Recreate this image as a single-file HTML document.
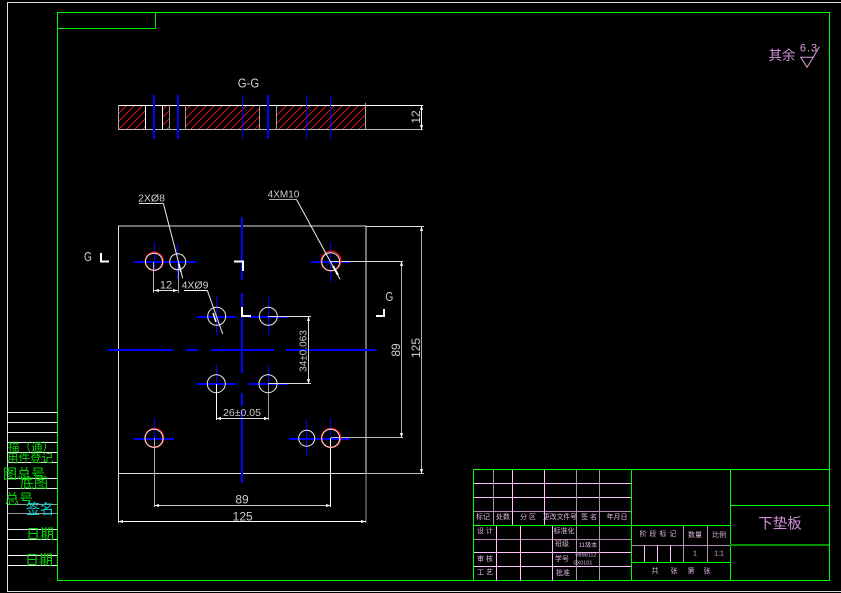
<!DOCTYPE html>
<html lang="zh"><head><meta charset="utf-8"><title>下垫板</title>
<style>
html,body{margin:0;padding:0;background:#000;width:841px;height:593px;overflow:hidden}
svg{display:block}
text{font-family:"Liberation Sans","Noto Sans CJK SC",sans-serif;text-anchor:middle;dominant-baseline:central}
.c line,.c rect,.c polyline{shape-rendering:crispEdges}
.p{fill:#e0b8e0;font-size:7px}
.d{fill:#ccc;font-size:11px;font-family:"Liberation Sans","Noto Sans CJK SC",sans-serif}
.g{fill:#00d800}
</style></head><body>
<svg width="841" height="593" viewBox="0 0 841 593" xmlns="http://www.w3.org/2000/svg">
<defs>
<pattern id="h" patternUnits="userSpaceOnUse" width="8" height="8"><path d="M-1 9L9 -1" stroke="#e01010" stroke-width="1"/></pattern>
</defs>
<rect width="841" height="593" fill="#000"/>
<g class="c" fill="none">
<polyline points="841,2.5 7.5,2.5 7.5,591.5 841,591.5" stroke="#ddd"/>
<g stroke="#eee">
<line x1="8" x2="57" y1="412.5" y2="412.5"/><line x1="8" x2="57" y1="422.5" y2="422.5"/><line x1="8" x2="57" y1="432.5" y2="432.5"/><line x1="8" x2="57" y1="442.5" y2="442.5"/><line x1="8" x2="57" y1="452.5" y2="452.5"/><line x1="8" x2="57" y1="462.5" y2="462.5"/><line x1="8" x2="57" y1="478.5" y2="478.5"/><line x1="8" x2="57" y1="488.5" y2="488.5"/><line x1="8" x2="57" y1="504.5" y2="504.5" stroke="#999"/><line x1="8" x2="57" y1="513.5" y2="513.5" stroke="#999"/><line x1="8" x2="57" y1="529.5" y2="529.5"/><line x1="8" x2="57" y1="539.5" y2="539.5"/><line x1="8" x2="57" y1="555.5" y2="555.5" stroke="#fff"/><line x1="8" x2="57" y1="565.5" y2="565.5" stroke="#fff"/>
</g>
<rect x="57.5" y="12.5" width="772" height="568" stroke="#00ff00"/>
<polyline points="57.5,28.5 155.5,28.5 155.5,12.5" stroke="#00f000"/>
<g stroke="#ffc0ff">
<line x1="473" x2="631" y1="483.5" y2="483.5"/><line x1="473" x2="631" y1="497.5" y2="497.5"/><line x1="473" x2="631" y1="511.5" y2="511.5" stroke="#b090b0"/>
<line x1="473" x2="631" y1="539.5" y2="539.5" stroke="#b090b0"/><line x1="473" x2="631" y1="552.5" y2="552.5"/><line x1="473" x2="631" y1="566.5" y2="566.5"/>
<line x1="493.5" x2="493.5" y1="470" y2="525" stroke="#b090b0"/><line x1="512.5" x2="512.5" y1="470" y2="525"/><line x1="544.5" x2="544.5" y1="470" y2="525"/><line x1="576.5" x2="576.5" y1="470" y2="581" stroke="#b090b0"/><line x1="599.5" x2="599.5" y1="470" y2="581" stroke="#b090b0"/>
<line x1="496.5" x2="496.5" y1="525" y2="581"/><line x1="520.5" x2="520.5" y1="525" y2="581"/><line x1="552.5" x2="552.5" y1="525" y2="581"/>
<line x1="631" x2="730" y1="545.5" y2="545.5" stroke="#b090b0"/>
<line x1="683.5" x2="683.5" y1="525" y2="562" stroke="#b090b0"/><line x1="707.5" x2="707.5" y1="525" y2="562" stroke="#b090b0"/>
<line x1="644.5" x2="644.5" y1="545" y2="562"/><line x1="657.5" x2="657.5" y1="545" y2="562"/><line x1="670.5" x2="670.5" y1="545" y2="562"/>
</g>
<g stroke="#00ff00">
<line x1="473" x2="829" y1="469.5" y2="469.5"/><line x1="473.5" x2="473.5" y1="469" y2="581"/>
<line x1="473" x2="730" y1="525.5" y2="525.5"/><line x1="631.5" x2="631.5" y1="469" y2="581"/><line x1="730.5" x2="730.5" y1="469" y2="581"/>
<line x1="730" x2="829" y1="505.5" y2="505.5"/><line x1="730" x2="829" y1="545" y2="545" stroke="#009000" stroke-width="2"/><line x1="631" x2="730" y1="562.5" y2="562.5"/>
</g>
<rect x="118" y="105" width="27" height="24" fill="url(#h)"/><rect x="162" y="105" width="8" height="24" fill="url(#h)"/><rect x="186" y="105" width="73" height="24" fill="url(#h)"/><rect x="277" y="105" width="88" height="24" fill="url(#h)"/>
<g stroke="#ddd">
<line x1="118" x2="423" y1="105.5" y2="105.5" stroke="#fff"/><line x1="118" x2="423" y1="129.5" y2="129.5" stroke="#bbb"/>
<line x1="118.5" x2="118.5" y1="105" y2="130" stroke="#aaa"/><line x1="145.5" x2="145.5" y1="105" y2="130" stroke="#fff"/><line x1="162.5" x2="162.5" y1="105" y2="130" stroke="#fff"/><line x1="169.5" x2="169.5" y1="105" y2="130" stroke="#999"/><line x1="185.5" x2="185.5" y1="105" y2="130" stroke="#999"/><line x1="259.5" x2="259.5" y1="105" y2="130" stroke="#999"/><line x1="276.5" x2="276.5" y1="105" y2="130" stroke="#999"/><line x1="365.5" x2="365.5" y1="103" y2="130" stroke="#aaa"/><line x1="421.5" x2="421.5" y1="105" y2="130" stroke="#fff"/>
</g>
<g stroke="#0000ff">
<line x1="154" x2="154" y1="95" y2="139" stroke-width="2"/><line x1="178" x2="178" y1="95" y2="139" stroke-width="2"/><line x1="268" x2="268" y1="95" y2="139" stroke-width="2"/><line x1="242.5" x2="242.5" y1="95" y2="139"/><line x1="306.5" x2="306.5" y1="95" y2="139"/><line x1="330.5" x2="330.5" y1="95" y2="139"/>
</g>
<rect x="118.5" y="226" width="247.500" height="247.500" stroke="#ddd"/>
<g stroke="#0000ff">
<line x1="242" x2="242" y1="217" y2="280" stroke-width="2"/><line x1="242" x2="242" y1="293" y2="373" stroke-width="2"/><line x1="242" x2="242" y1="393" y2="406" stroke-width="2"/><line x1="242" x2="242" y1="410" y2="483" stroke-width="2"/>
<g stroke-width="2">
<line x1="108" x2="173" y1="350" y2="350"/><line x1="186" x2="198" y1="350" y2="350"/><line x1="211" x2="274" y1="350" y2="350"/><line x1="286" x2="376" y1="350" y2="350"/>
<line x1="134" x2="165" y1="262" y2="262"/><line x1="165" x2="196" y1="262" y2="262"/><line x1="197" x2="236" y1="317" y2="317"/><line x1="248" x2="288" y1="317" y2="317"/><line x1="311" x2="350" y1="262" y2="262"/><line x1="197" x2="236" y1="384" y2="384"/><line x1="249" x2="288" y1="384" y2="384"/><line x1="134" x2="174" y1="439" y2="439"/><line x1="289" x2="320" y1="439" y2="439"/><line x1="312" x2="350" y1="439" y2="439"/>
</g>
<line x1="154.5" x2="154.5" y1="242" y2="271"/><line x1="177.5" x2="177.5" y1="244" y2="279"/><line x1="216.5" x2="216.5" y1="297" y2="335"/><line x1="268.5" x2="268.5" y1="297" y2="335"/><line x1="330.5" x2="330.5" y1="242" y2="282"/><line x1="216.5" x2="216.5" y1="365" y2="403"/><line x1="268.5" x2="268.5" y1="365" y2="403"/><line x1="154.5" x2="154.5" y1="418" y2="447"/><line x1="306.5" x2="306.5" y1="420" y2="456"/><line x1="330.5" x2="330.5" y1="418" y2="447"/>
</g>
<g stroke="#ddd">
<line x1="153.5" x2="153.5" y1="262" y2="293" stroke="#bbb"/><line x1="178.5" x2="178.5" y1="262" y2="293" stroke="#999"/><line x1="154" x2="178" y1="290.5" y2="290.5"/>
<line x1="331" x2="403" y1="261.5" y2="261.5"/><line x1="331" x2="403" y1="437.5" y2="437.5" stroke="#bbb"/><line x1="401.5" x2="401.5" y1="261" y2="438" stroke="#aaa"/>
<line x1="366" x2="424" y1="226.5" y2="226.5"/><line x1="366" x2="424" y1="473.5" y2="473.5" stroke="#bbb"/><line x1="421.5" x2="421.5" y1="226" y2="474" stroke="#aaa"/>
<line x1="268" x2="311" y1="316.5" y2="316.5"/><line x1="268" x2="311" y1="383.5" y2="383.5"/><line x1="308.5" x2="308.5" y1="316" y2="384"/>
<line x1="216.5" x2="216.5" y1="384" y2="420" stroke="#fff"/><line x1="268.5" x2="268.5" y1="384" y2="420" stroke="#999"/><line x1="216" x2="269" y1="418.5" y2="418.5"/>
<line x1="154.5" x2="154.5" y1="438" y2="507" stroke="#aaa"/><line x1="330.5" x2="330.5" y1="438" y2="507" stroke="#fff"/><line x1="154" x2="331" y1="505.5" y2="505.5" stroke="#ccc"/>
<line x1="118.5" x2="118.5" y1="473" y2="523" stroke="#ddd"/><line x1="366" x2="366" y1="473" y2="523" stroke="#999"/><line x1="118" x2="366" y1="521.5" y2="521.5" stroke="#fff"/>
<line x1="139" x2="163" y1="203.5" y2="203.5"/><line x1="184" x2="207" y1="290.5" y2="290.5" stroke="#fff"/><line x1="269" x2="297" y1="199.5" y2="199.5" stroke="#aaa"/>
</g>
<g stroke="#fff" stroke-width="2">
<polyline points="101,253 101,261.5 109,261.5"/><polyline points="234,261.5 243,261.5 243,271"/><polyline points="242,307 242,316 251,316"/><polyline points="376,316 384,316 384,309"/>
</g>
</g>
<g fill="none">
<g stroke="#e01010" stroke-width="1.4">
<circle cx="154.3" cy="261.2" r="9"/><circle cx="331" cy="261" r="9.8"/><circle cx="154.3" cy="438" r="9.4"/><circle cx="331" cy="438" r="9.6"/>
</g>
<g stroke="#eee" stroke-width="1">
<circle cx="154" cy="261.7" r="8.5"/><circle cx="177.7" cy="261.7" r="8"/><circle cx="216.7" cy="316.3" r="9"/><circle cx="268.3" cy="316.3" r="9"/><circle cx="330.7" cy="261.7" r="9"/><circle cx="216.3" cy="383.7" r="9"/><circle cx="268" cy="383.7" r="9"/><circle cx="154" cy="438.3" r="9"/><circle cx="306.7" cy="438.3" r="8"/><circle cx="330.7" cy="438.3" r="9"/>
</g>
<g stroke="#eee">
<path d="M163.3 203.3L182.7 278.3"/><path d="M207.3 290.3L222.7 334"/><path d="M296.7 199.7L340 279.3"/>
<path d="M333 266L338 275" stroke="#fff" stroke-width="2"/><path d="M179 264L181 272" stroke="#fff" stroke-width="1.5"/><path d="M213 313L216 322" stroke="#fff" stroke-width="1.5"/>
</g>
<path d="M800.7 57.3H813.3L807 67.3Z" stroke="#e0a0e0"/><path d="M813.3 57.3L819.3 46.7" stroke="#e0a0e0"/>
</g>
<g fill="#fff">
<path d="M154 290.5l5-1.5v3zM178 290.5l-5-1.5v3zM216 418.5l5-1.5v3zM269 418.5l-5-1.5v3zM154 505.5l5-1.5v3zM331 505.5l-5-1.5v3zM118 521.5l5-1.5v3zM366 521.5l-5-1.5v3z"/>
<path d="M401.5 261l-1.5 5h3zM401.5 438l-1.5-5h3zM421.5 226l-1.5 5h3zM421.5 474l-1.5-5h3zM308.5 316l-1.5 5h3zM308.5 384l-1.5-5h3zM421.5 105l-1.5 5h3zM421.5 130l-1.5-5h3z"/>
</g>
<text class="d" transform="translate(248.500 83) scale(.95 1.1)" style="font-size:12px">G-G</text>
<text class="d" transform="translate(88 257) scale(.85 1.1)" style="font-size:12px">G</text>
<text class="d" transform="translate(389.300 297) scale(.85 1.1)" style="font-size:12px">G</text>
<text class="d" x="151.500" y="198.500" style="font-size:10.500px">2XØ8</text>
<text class="d" x="195" y="285.500" style="font-size:10.500px">4XØ9</text>
<text class="d" x="283.500" y="195" style="font-size:10px">4XM10</text>
<text class="d" x="166" y="285.500" style="font-size:11px">12</text>
<text class="d" x="242" y="413" style="font-size:10.500px">26±0.05</text>
<text class="d" x="242" y="499.500" style="font-size:12px">89</text>
<text class="d" x="242.700" y="516.500" style="font-size:12px">125</text>
<text class="d" transform="translate(416 117) rotate(-90)" style="font-size:12px">12</text>
<text class="d" transform="translate(396 350) rotate(-90)" style="font-size:12px">89</text>
<text class="d" transform="translate(416 348) rotate(-90)" style="font-size:12px">125</text>
<text class="d" transform="translate(304 351) rotate(-90)" style="font-size:10px">34±0.063</text>
<text x="782" y="55.500" style="font-size:13.500px;fill:#d090d8">其余</text>
<text x="809" y="48.500" style="font-size:11px;fill:#d8a0d8;letter-spacing:1px;font-family:'Liberation Sans',sans-serif">6.3</text>
<g class="g">
<text x="31" y="448" style="font-size:11.500px">描（通）</text>
<text x="30" y="459" style="font-size:11.500px">用件登记</text>
<text x="24" y="474" style="font-size:14px">图总号</text>
<text x="34" y="483" style="font-size:14px">底图</text>
<text x="19" y="499" style="font-size:14px">总号</text>
<text x="40" y="534" style="font-size:14px">日期</text>
<text x="39" y="560" style="font-size:14px">日期</text>
</g>
<text x="40" y="509" style="font-size:14px;fill:#00d8d8">签名</text>
<g class="p">
<text x="483" y="517.500">标记</text><text x="503" y="517.500">处数</text><text x="528" y="517.500">分 区</text><text x="560" y="517.500" style="font-size:6.800px">更改文件号</text><text x="589" y="517.500">签 名</text><text x="617" y="517.500">年月日</text>
<text x="485" y="531.500">设 计</text><text x="485" y="559.500">审 核</text><text x="485" y="573">工 艺</text>
<text x="564" y="531.500">标准化</text><text x="562" y="544.500">班级</text><text x="562" y="559.500">学号</text><text x="563" y="573.500">批准</text>
<text x="588" y="546" style="font-size:6px">11级本</text><text x="586" y="555.500" style="font-size:5.500px">0888112</text><text x="583" y="563.500" style="font-size:5.500px">0X0101</text>
<text x="658" y="534.500" style="word-spacing:1px">阶 段 标 记</text><text x="695" y="535.500">数量</text><text x="719" y="535.500">比例</text>
<text x="695" y="554">1</text><text x="719" y="554">1:1</text>
<text x="655" y="571.500">共</text><text x="674" y="571.500">张</text><text x="691" y="571.500">第</text><text x="707" y="571.500">张</text>
</g>
<text x="780" y="524.500" style="font-size:14.500px;fill:#d090d8">下垫板</text>
</svg>
</body></html>
